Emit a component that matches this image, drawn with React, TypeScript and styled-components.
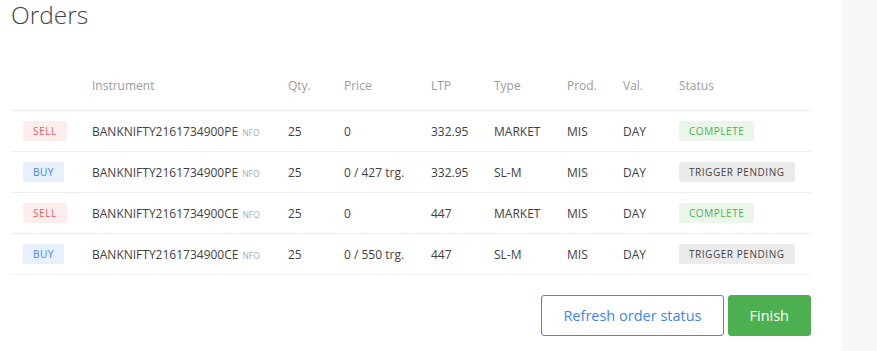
import styled, { createGlobalStyle } from "styled-components";

const GlobalStyle = createGlobalStyle`
  body {
    margin: 0;
    font-family: "Open Sans", "Noto Sans", sans-serif;
    color: #444444;
    background: #ffffff;
  }
`;

const Page = styled.div`
  display: flex;
  min-height: 351px;
`;

const Main = styled.main`
  width: 841px;
  box-sizing: border-box;
  padding: 0 30px 0 11px;
  background: #ffffff;
`;

const SideStrip = styled.aside`
  flex: 1;
  background: #f7f7f7;
`;

const Title = styled.h1`
  margin: 0;
  height: 60px;
  font-size: 24.5px;
  line-height: 30px;
  font-weight: 300;
  color: #444444;
`;

const Table = styled.table`
  width: 800px;
  border-collapse: collapse;
  table-layout: fixed;
`;

const HeadCell = styled.th`
  height: 50px;
  padding: 0 0 0 12px;
  text-align: left;
  font-size: 12px;
  font-weight: 400;
  color: #9b9b9b;
  border-bottom: 1px solid #eeeeee;
`;

const Row = styled.tr`
  border-bottom: 1px solid #eeeeee;
`;

const Cell = styled.td`
  height: 40px;
  padding: 0 0 0 12px;
  font-size: 12px;
  color: #3f3f3f;
  white-space: nowrap;
`;

const Exchange = styled.span`
  margin-left: 4px;
  font-size: 8.5px;
  color: #aaaaaa;
`;

const Tag = styled.span<{ $kind: "sell" | "buy" | "complete" | "pending" }>`
  display: inline-block;
  height: 20px;
  line-height: 20px;
  padding: 0 10px;
  border-radius: 2px;
  font-size: 10px;
  letter-spacing: 0.55px;
  color: ${({ $kind }) =>
    $kind === "sell"
      ? "#e25f5b"
      : $kind === "buy"
      ? "#4184f3"
      : $kind === "complete"
      ? "#4caf50"
      : "#444444"};
  background: ${({ $kind }) =>
    $kind === "sell"
      ? "#fdeded"
      : $kind === "buy"
      ? "#e8f0fe"
      : $kind === "complete"
      ? "#ebf6eb"
      : "#ebebeb"};
`;

const Actions = styled.div`
  display: flex;
  justify-content: flex-end;
  gap: 4px;
  width: 800px;
  margin-top: 20px;
`;

const Button = styled.button<{ $primary?: boolean }>`
  height: 41px;
  padding: 0 21px;
  border-radius: 3px;
  font-family: "Open Sans", "Noto Sans", sans-serif;
  font-size: 14.5px;
  cursor: pointer;
  border: 1px solid ${({ $primary }) => ($primary ? "#4caf50" : "#4184f3")};
  background: ${({ $primary }) => ($primary ? "#4caf50" : "#ffffff")};
  color: ${({ $primary }) => ($primary ? "#ffffff" : "#4184f3")};
`;

type Order = {
  side: "sell" | "buy";
  symbol: string;
  qty: number;
  price: string;
  ltp: string;
  type: string;
  status: "complete" | "pending";
};

const orders: Order[] = [
  { side: "sell", symbol: "BANKNIFTY2161734900PE", qty: 25, price: "0", ltp: "332.95", type: "MARKET", status: "complete" },
  { side: "buy", symbol: "BANKNIFTY2161734900PE", qty: 25, price: "0 / 427 trg.", ltp: "332.95", type: "SL-M", status: "pending" },
  { side: "sell", symbol: "BANKNIFTY2161734900CE", qty: 25, price: "0", ltp: "447", type: "MARKET", status: "complete" },
  { side: "buy", symbol: "BANKNIFTY2161734900CE", qty: 25, price: "0 / 550 trg.", ltp: "447", type: "SL-M", status: "pending" },
];

const columnWidths = [69, 196, 56, 87, 63, 73, 56, 56, 144];
const headers = ["", "Instrument", "Qty.", "Price", "LTP", "Type", "Prod.", "Val.", "Status"];

export default function App() {
  return (
    <Page>
      <GlobalStyle />
      <Main>
        <Title>Orders</Title>
        <Table>
          <colgroup>
            {columnWidths.map((w, i) => (
              <col key={i} style={{ width: w }} />
            ))}
          </colgroup>
          <thead>
            <tr>
              {headers.map((h, i) => (
                <HeadCell key={i}>{h}</HeadCell>
              ))}
            </tr>
          </thead>
          <tbody>
            {orders.map((o, i) => (
              <Row key={i}>
                <Cell>
                  <Tag $kind={o.side}>{o.side.toUpperCase()}</Tag>
                </Cell>
                <Cell>
                  {o.symbol}
                  <Exchange>NFO</Exchange>
                </Cell>
                <Cell>{o.qty}</Cell>
                <Cell>{o.price}</Cell>
                <Cell>{o.ltp}</Cell>
                <Cell>{o.type}</Cell>
                <Cell>MIS</Cell>
                <Cell>DAY</Cell>
                <Cell>
                  <Tag $kind={o.status}>
                    {o.status === "complete" ? "COMPLETE" : "TRIGGER PENDING"}
                  </Tag>
                </Cell>
              </Row>
            ))}
          </tbody>
        </Table>
        <Actions>
          <Button>Refresh order status</Button>
          <Button $primary>Finish</Button>
        </Actions>
      </Main>
      <SideStrip />
    </Page>
  );
}
